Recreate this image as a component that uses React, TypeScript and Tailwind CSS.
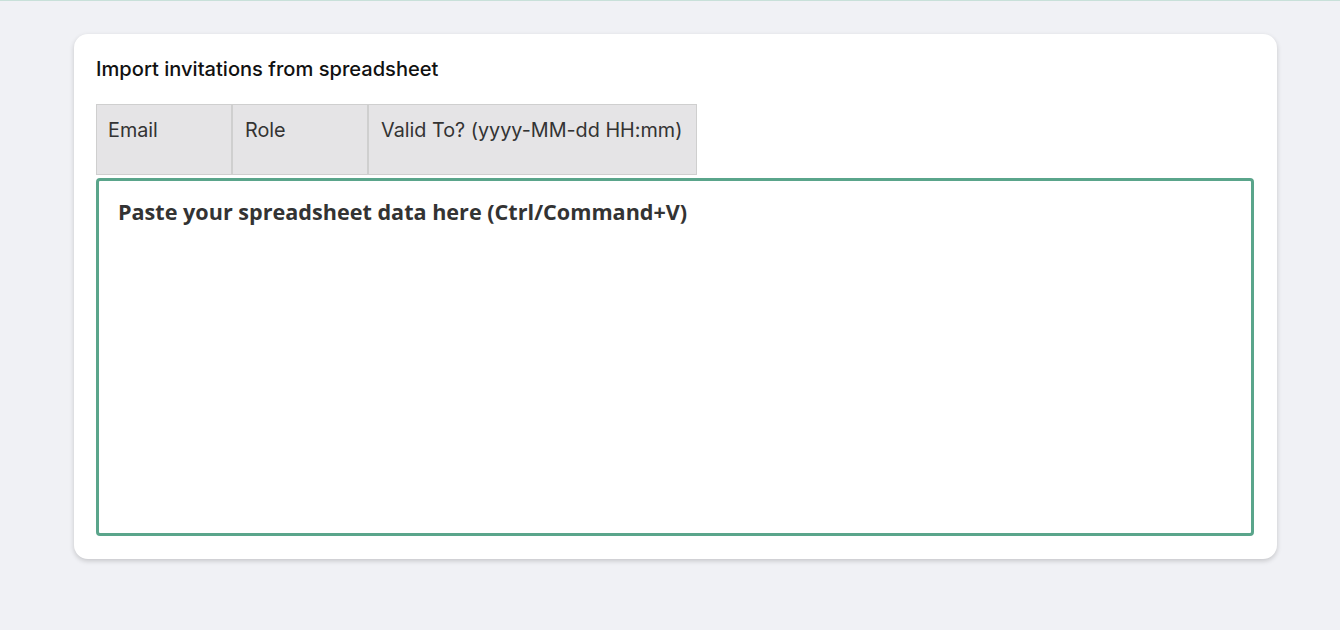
import React from "react";

export default function App() {
  return (
    <div className="min-h-[630px] w-full bg-[#f0f1f5] border-t border-[#c8e0d9]" style={{ fontFamily: "Inter, 'Noto Sans', sans-serif" }}>
      <div className="pt-[33px] pl-[74px]">
        <div className="w-[1203px] h-[525px] bg-white rounded-[14px] shadow-[0_2px_5px_rgba(0,0,0,0.18)] px-[22px] pt-[22px]">
          <h2 className="text-[20.1px] font-medium text-[#111] leading-[26px]">Import invitations from spreadsheet</h2>
          <div className="flex mt-[22px]">
            <div className="w-[136px] h-[71px] bg-[#e5e4e6] border border-[#cfcfcf] px-[11px] pt-[13px] text-[19.8px] text-[#333] leading-[24px]">Email</div>
            <div className="w-[136px] h-[71px] bg-[#e5e4e6] border border-[#cfcfcf] px-[12px] pt-[13px] text-[19.8px] text-[#333] leading-[24px]">Role</div>
            <div className="h-[71px] bg-[#e5e4e6] border border-[#cfcfcf] pl-[12px] pr-[14px] pt-[13px] text-[19.8px] text-[#333] leading-[24px] whitespace-nowrap">Valid To? (yyyy-MM-dd HH:mm)</div>
          </div>
          <textarea
            className="block mt-[3px] w-[1158px] h-[358px] border-[3px] border-[#5aa58b] rounded-[4px] px-[19px] pt-[17px] resize-none outline-none text-[21.6px] leading-[28px] font-bold text-[#333] placeholder:text-[#333]"
            style={{ fontFamily: "'Open Sans', 'Noto Sans', sans-serif" }}
            placeholder="Paste your spreadsheet data here (Ctrl/Command+V)"
          />
        </div>
      </div>
    </div>
  );
}
